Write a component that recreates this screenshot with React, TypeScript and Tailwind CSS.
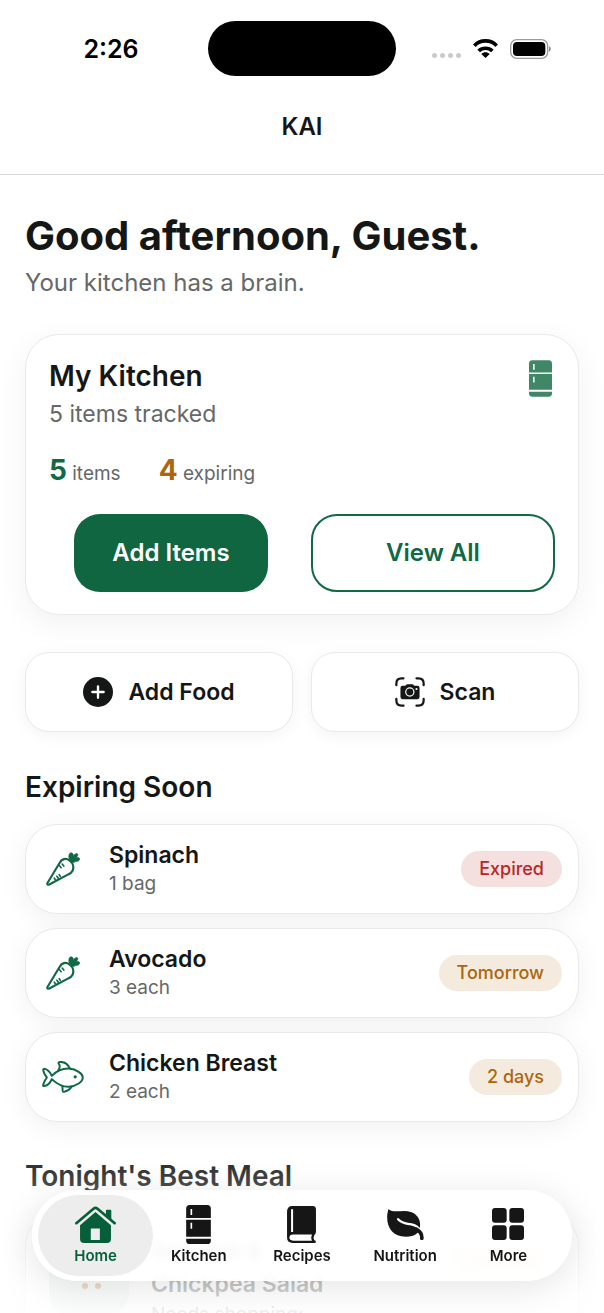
import type { ReactNode } from "react";

type IconProps = { className?: string };

function WifiIcon({ className }: IconProps) {
  return (
    <svg viewBox="0 0 75 57" className={className} fill="none" stroke="currentColor" strokeWidth="11" aria-hidden="true">
      <path d="M4 20C22 1 53 1 71 20" />
      <path d="M17 36C28 25 47 25 58 36" />
      <path d="M25 45C32 38 43 38 50 45L37.500 57Z" fill="currentColor" stroke="none" />
    </svg>
  );
}

function BatteryIcon({ className }: IconProps) {
  return (
    <svg viewBox="0 0 123 60" className={className} aria-hidden="true">
      <rect x="2" y="2" width="111" height="56" rx="18" fill="none" stroke="#9a9a9a" strokeWidth="4" />
      <rect x="9" y="9" width="97" height="42" rx="12" fill="#000" />
      <path d="M117 22C124 25 124 35 117 38Z" fill="#8a8a8a" />
    </svg>
  );
}

function FridgeIcon({ className }: IconProps) {
  return (
    <svg viewBox="0 0 74 117" className={className} fill="currentColor" fillRule="evenodd" aria-hidden="true">
      <path d="M11 0H63Q74 0 74 11V39H0V11Q0 0 11 0ZM13 12V30H18V12Z" />
      <path d="M0 44H74V95H0ZM13 53V71H18V53Z" />
      <path d="M0 101H74V107Q74 117 63 117H11Q0 117 0 107Z" />
    </svg>
  );
}

function HomeIcon({ className }: IconProps) {
  return (
    <svg viewBox="0 0 122 110" className={className} fill="currentColor" aria-hidden="true">
      <path d="M92 14Q92 11 95 11H105Q108 11 108 14V42L92 29Z" />
      <path d="M4 51L55 8Q61 3 67 8L118 51" fill="none" stroke="currentColor" strokeWidth="8" strokeLinecap="round" />
      <path fillRule="evenodd" d="M61 18L107 57V98Q107 110 95 110H27Q15 110 15 98V57ZM47 67V101H74V67Z" />
    </svg>
  );
}

function BookIcon({ className }: IconProps) {
  return (
    <svg viewBox="0 0 86 110" className={className} fill="currentColor" fillRule="evenodd" aria-hidden="true">
      <path d="M16 0H76Q86 0 86 10V76Q86 83 81 86Q77 94 81 102Q86 103 86 106Q86 110 81 110H17Q0 110 0 93V17Q0 0 16 0ZM12 10V77H18V10ZM18 85Q7 85 7 94Q7 103 18 103H74Q70 94 74 85Z" />
    </svg>
  );
}

function LeafIcon({ className }: IconProps) {
  return (
    <svg viewBox="0 0 111 94" className={className} aria-hidden="true">
      <path d="M4 0C10 10 32 6 52 6C84 6 104 26 99 56C97 72 86 84 56 84C14 84-5 52 1 12Z" fill="currentColor" />
      <path d="M33 31C43 43 56 44 70 46C88 49 95 55 103 70" fill="none" stroke="#fff" strokeWidth="7" strokeLinecap="round" />
      <path d="M88 61C99 67 106 77 105 89" fill="none" stroke="currentColor" strokeWidth="11" strokeLinecap="round" />
    </svg>
  );
}

function GridIcon({ className }: IconProps) {
  return (
    <svg viewBox="0 0 96 96" className={className} fill="currentColor" aria-hidden="true">
      <rect width="44" height="44" rx="9" />
      <rect x="52" width="44" height="44" rx="9" />
      <rect y="52" width="44" height="44" rx="9" />
      <rect x="52" y="52" width="44" height="44" rx="9" />
    </svg>
  );
}

function CarrotIcon({ className }: IconProps) {
  return (
    <svg viewBox="0 0 103 102" className={className} fill="none" stroke="currentColor" strokeWidth="6.500" strokeLinecap="round" strokeLinejoin="round" aria-hidden="true">
      <path d="M4 94L41 33C47 20 60 17 71 25C84 34 87 52 76 62C73 65 70 66 66 68L10 98Q3 100 4 94Z" />
      <path d="M39 39L46 47M49 36L54 42M33 73L38 80M25 79L29 84M40 68L43 73" strokeWidth="5" />
      <path d="M71 24C67 12 70 2 76 2C81 2 83 6 83 12C87 4 94 2 96 6C98 9 94 14 91 17C98 15 103 17 102 22C101 26 96 28 90 28C86 31 80 33 77 30Z" fill="currentColor" strokeWidth="2" />
    </svg>
  );
}

function FishIcon({ className }: IconProps) {
  return (
    <svg viewBox="0 0 126 97" className={className} fill="none" stroke="currentColor" strokeWidth="6" strokeLinecap="round" strokeLinejoin="round" aria-hidden="true">
      <path d="M29 45C45 29 61 22 81 23C104 25 123 38 123 50C123 63 104 76 81 78C59 79 44 69 29 55C25 65 17 75 5 76Q2 76 3 72C5 64 9 57 14 50C8 43 4 36 3 28Q3 23 8 24C18 27 25 36 29 45Z" />
      <path d="M48 29C54 21 55 14 50 8Q48 4 53 3C68 2 78 9 84 23" />
      <path d="M61 76L62 90Q63 95 68 93C77 90 84 86 89 78" />
      <circle cx="100" cy="48" r="5" fill="currentColor" stroke="none" />
    </svg>
  );
}

function AddCircleIcon({ className }: IconProps) {
  return (
    <svg viewBox="0 0 90 90" className={className} aria-hidden="true">
      <circle cx="45" cy="45" r="45" fill="currentColor" />
      <path d="M45 28V62M28 45H62" stroke="#fff" strokeWidth="7" strokeLinecap="round" />
    </svg>
  );
}

function ScanIcon({ className }: IconProps) {
  return (
    <svg viewBox="0 0 88 88" className={className} fill="none" stroke="currentColor" strokeWidth="6.500" strokeLinecap="round" aria-hidden="true">
      <path d="M4 24V19Q4 4 19 4H25M63 4H69Q84 4 84 19V24M84 64V69Q84 84 69 84H63M25 84H19Q4 84 4 69V64" />
      <path d="M22 26H30L34 22Q35 21 37 21H50Q52 21 53 22L57 26H66Q72 26 72 32V59Q72 65 66 65H22Q16 65 16 59V32Q16 26 22 26Z" fill="currentColor" stroke="none" />
      <circle cx="43.500" cy="44" r="12" stroke="#fff" strokeWidth="3.500" />
      <circle cx="63" cy="35" r="3" fill="#fff" stroke="none" />
    </svg>
  );
}

function CartIcon({ className }: IconProps) {
  return (
    <svg viewBox="0 0 28 28" className={className} fill="none" stroke="currentColor" strokeWidth="2" aria-hidden="true">
      <path d="M1 3H5L9 19H24M6 7H26L23 15H8" />
      <circle cx="10" cy="25" r="2" fill="currentColor" />
      <circle cx="23" cy="25" r="2" fill="currentColor" />
    </svg>
  );
}

function StatusBar() {
  return (
    <div className="grid grid-cols-[1fr_188px_1fr] items-center pt-[21px] text-black">
      <div className="pl-[14px] text-center text-[25px] leading-8 font-semibold">2:26</div>
      <div className="h-[55px] rounded-full bg-black" />
      <div className="flex items-center justify-center pr-[18px]">
        <div className="flex gap-[3px] pt-[14px]" aria-hidden="true">
          <span className="size-[5px] rounded-full bg-[#cbcbcb]" />
          <span className="size-[5px] rounded-full bg-[#cbcbcb]" />
          <span className="size-[5px] rounded-full bg-[#cbcbcb]" />
          <span className="size-[5px] rounded-full bg-[#cbcbcb]" />
        </div>
        <WifiIcon className="ml-3 h-[19px] w-[25px]" />
        <BatteryIcon className="ml-3 h-5 w-[41px]" />
      </div>
    </div>
  );
}

const cardClass = "border border-[#e9e9e9] bg-white";
const quickActionClass =
  "flex h-20 items-center justify-center gap-[15px] rounded-3xl border border-[#e9e9e9] bg-white text-[23px] font-semibold shadow-[0_3px_16px_rgba(0,0,0,0.05)]";

type Food = { name: string; amount: string; status: string; expired?: boolean; icon: ReactNode };

const foods: Food[] = [
  { name: "Spinach", amount: "1 bag", status: "Expired", expired: true, icon: <CarrotIcon className="size-[34px]" /> },
  { name: "Avocado", amount: "3 each", status: "Tomorrow", icon: <CarrotIcon className="size-[34px]" /> },
  { name: "Chicken Breast", amount: "2 each", status: "2 days", icon: <FishIcon className="h-8 w-[42px]" /> },
];

function FoodRow({ food }: { food: Food }) {
  return (
    <li className={`${cardClass} flex h-[90px] items-center rounded-[32px] pr-4 pl-[15px] shadow-[0_6px_28px_rgba(0,0,0,0.06)]`}>
      <div className="flex w-11 justify-center text-[#116844]">{food.icon}</div>
      <div className="ml-6 flex-1">
        <div className="text-[23px] leading-[30px] font-semibold">{food.name}</div>
        <div className="text-[19px] leading-7 text-[#666867]">{food.amount}</div>
      </div>
      <span
        className={`rounded-full px-[18px] text-lg leading-9 font-medium ${
          food.expired ? "bg-[#f5e0e0] text-[#b92727]" : "bg-[#f5eade] text-[#ac660c]"
        }`}
      >
        {food.status}
      </span>
    </li>
  );
}

const tabs = [
  { label: "Home", icon: <HomeIcon className="h-[37px] w-[41px]" /> },
  { label: "Kitchen", icon: <FridgeIcon className="h-[39px] w-[25px]" /> },
  { label: "Recipes", icon: <BookIcon className="h-[37px] w-[29px]" /> },
  { label: "Nutrition", icon: <LeafIcon className="h-[31px] w-[37px]" /> },
  { label: "More", icon: <GridIcon className="size-8" /> },
];

function TabBar() {
  return (
    <nav className="absolute inset-x-8 bottom-8 grid grid-cols-5 rounded-full bg-white/90 px-3 py-[5px] shadow-[0_6px_36px_rgba(0,0,0,0.11)] backdrop-blur-[4px]">
      {tabs.map((tab, i) => (
        <a
          key={tab.label}
          href={`#${tab.label.toLowerCase()}`}
          aria-current={i === 0 ? "page" : undefined}
          className={`-mx-[6px] flex h-[81px] flex-col items-center rounded-full pt-[9px] ${
            i === 0 ? "bg-[#ededed] text-[#075f3a]" : "text-[#161616]"
          }`}
        >
          <span className="flex h-10 items-center">{tab.icon}</span>
          <span className="mt-px text-[15px] leading-[22px] font-semibold">{tab.label}</span>
        </a>
      ))}
    </nav>
  );
}

export default function App() {
  return (
    <div className="relative flex h-screen flex-col overflow-hidden bg-white font-['Inter',sans-serif] text-[#151716]">
      <header className="border-b border-[#d9d9d9]">
        <StatusBar />
        <div className="flex h-[98px] items-center justify-center pt-1 text-2xl leading-8 font-semibold">KAI</div>
      </header>

      <main className="min-h-0 flex-1 overflow-y-auto px-[25px] pt-[37px] [scrollbar-width:none]">
        <h1 className="text-[40px] leading-[48px] font-bold">Good afternoon, Guest.</h1>
        <p className="mt-[7px] text-2xl leading-8 text-[#666867]">Your kitchen has a brain.</p>

        <section className={`${cardClass} mt-[35px] rounded-[34px] px-[23px] pt-6 pb-[22px] shadow-[0_8px_32px_rgba(0,0,0,0.06)]`}>
          <div className="flex items-start justify-between">
            <div>
              <h2 className="text-[28px] leading-[34px] font-semibold">My Kitchen</h2>
              <p className="mt-[5px] text-[23px] leading-8 text-[#666867]">5 items tracked</p>
            </div>
            <FridgeIcon className="mt-px mr-[3px] h-[37px] w-[23px] text-[#3f8767]" />
          </div>
          <div className="mt-[22px] flex gap-[38px] text-[19px] leading-9 text-[#666867]">
            <div>
              <span className="text-[28px] font-bold text-[#116844]">5</span> items
            </div>
            <div>
              <span className="text-[28px] font-bold text-[#ac660c]">4</span> expiring
            </div>
          </div>
          <div className="mt-[22px] grid grid-cols-2 gap-[18px]">
            <button className="mx-[25px] h-[78px] rounded-[26px] bg-[#116642] text-2xl font-semibold text-white">Add Items</button>
            <button className="h-[78px] rounded-[26px] border-2 border-[#116844] text-2xl font-semibold text-[#116844]">View All</button>
          </div>
        </section>

        <div className="mt-[37px] grid grid-cols-2 gap-[18px]">
          <button className={quickActionClass}>
            <AddCircleIcon className="size-[30px]" />
            Add Food
          </button>
          <button className={quickActionClass}>
            <ScanIcon className="size-[30px]" />
            Scan
          </button>
        </div>

        <h2 className="mt-[37px] text-[28px] leading-9 font-semibold">Expiring Soon</h2>
        <ul className="mt-[19px] flex flex-col gap-[14px]">
          {foods.map((food) => (
            <FoodRow key={food.name} food={food} />
          ))}
        </ul>

        <h2 className="mt-9 text-[28px] leading-9 font-semibold">Tonight's Best Meal</h2>
        <section className={`${cardClass} mt-[18px] flex items-start rounded-[34px] px-[23px] pt-[22px] pb-6 shadow-[0_8px_32px_rgba(0,0,0,0.06)]`}>
          <div className="flex size-20 items-center justify-center rounded-[22px] bg-[#e2efe9] text-[#ac660c]">
            <CartIcon className="size-7" />
          </div>
          <div className="ml-[22px] flex-1">
            <h3 className="text-[23px] leading-[33px] font-semibold">
              Spinach &amp;
              <br />
              Chickpea Salad
            </h3>
            <p className="text-[19px] leading-7 text-[#666867]">Needs shopping:</p>
          </div>
          <span className="mt-2 rounded-full bg-[#f5eade] px-[18px] text-lg leading-9 font-medium text-[#ac660c]">1 needed</span>
        </section>
      </main>

      <div className="pointer-events-none absolute inset-x-0 bottom-0 h-[170px] bg-linear-to-b from-white/0 to-white/90" />
      <TabBar />
    </div>
  );
}
